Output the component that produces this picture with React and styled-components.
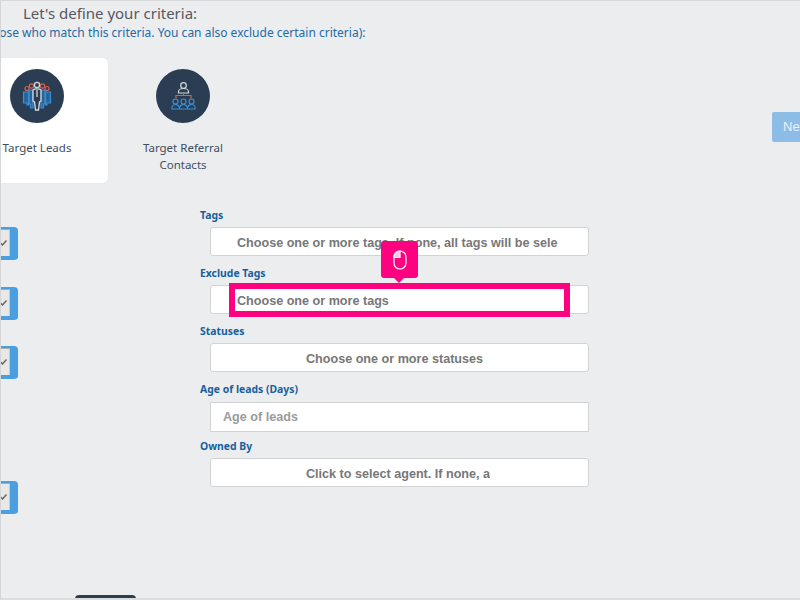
import React from 'react';
import styled, { createGlobalStyle } from 'styled-components';

const GlobalStyle = createGlobalStyle`
  html, body {
    margin: 0;
    padding: 0;
    background: #ecedef;
  }
`;

const fields = [
  { label: 'Tags', text: 'Choose one or more tags. If none, all tags will be selected', inset: 26, width: 321 },
  { label: 'Exclude Tags', text: 'Choose one or more tags', inset: 26, width: 321 },
  { label: 'Statuses', text: 'Choose one or more statuses', inset: 95, width: 230 },
  { label: 'Age of leads (Days)', text: 'Age of leads', inset: 12, width: 321, square: true },
  { label: 'Owned By', text: 'Click to select agent. If none, all agents', inset: 95, width: 184 },
];

const toggleGaps = [0, 27, 26, 102];

const LeadsIcon = () => (
  <svg width="54" height="54" viewBox="0 0 54 54" fill="none">
    <g stroke="#d9604c" strokeWidth="1.2">
      <circle cx="17" cy="19.5" r="2" />
      <circle cx="21.5" cy="17" r="2.2" />
      <circle cx="32.5" cy="17" r="2.2" />
      <circle cx="37" cy="19.5" r="2" />
    </g>
    <g stroke="#3a8fd6" strokeWidth="1.2" fill="#2a6496">
      <path d="M13.500 23h5v13h-1.500v-2h-3.500z" />
      <path d="M19 21h4v18h-2.500v-4h-1.500z" />
      <path d="M40.500 23h-5v13h1.500v-2h3.500z" />
      <path d="M35 21h-4v18h2.500v-4h1.500z" />
    </g>
    <g stroke="#d5d9dd" strokeWidth="1.3" fill="#2b3d52">
      <circle cx="27" cy="16" r="2.600" />
      <path d="M23 21c1-1.500 7-1.500 8 0v11l-1.500 1-1 8h-3l-1-8-1.500-1z" />
      <path d="M27 21v7" />
    </g>
  </svg>
);

const ReferralIcon = () => (
  <svg width="54" height="54" viewBox="0 0 54 54" fill="none">
    <g stroke="#d5d9dd" strokeWidth="1.200">
      <circle cx="27.500" cy="16.500" r="2.800" />
      <path d="M22.500 24v-1.500c0-1.500 2-3 5-3s5 1.500 5 3V24z" />
    </g>
    <path d="M27.500 24v3M20 29.500v-3h15v3" stroke="#d9604c" strokeWidth="1.200" />
    <g stroke="#3a8fd6" strokeWidth="1.200">
      <circle cx="19.500" cy="32.500" r="2.500" />
      <circle cx="27.500" cy="32.500" r="2.500" />
      <circle cx="35.500" cy="32.500" r="2.500" />
      <path d="M16 40v-1.500c0-1.500 1.500-3 3.500-3s3.500 1.500 4 3c.5-1.500 2-3 4-3s3.500 1.500 4 3c.5-1.500 2-3 4-3s3.500 1.500 3.500 3V40z" />
    </g>
  </svg>
);

const MouseIcon = () => (
  <svg width="14" height="20" viewBox="0 0 14 20" fill="none" stroke="#fff" strokeWidth="1.200">
    <rect x="1" y="1" width="12" height="18" rx="6" />
    <path d="M7 1v6.500H1V7a6 6 0 0 1 6-6z" fill="#ffc4e1" />
  </svg>
);

const App = () => (
  <Page>
    <GlobalStyle />
    <Heading>Let's define your criteria:</Heading>
    <Subtitle>Select those who match this criteria. You can also exclude certain criteria):</Subtitle>
    <CardRow>
      <Card $active>
        <IconCircle><LeadsIcon /></IconCircle>
        <CardLabel>Target Leads</CardLabel>
      </Card>
      <Card>
        <IconCircle><ReferralIcon /></IconCircle>
        <CardLabel>Target Referral Contacts</CardLabel>
      </Card>
      <NextButton>Next</NextButton>
    </CardRow>
    <Columns>
      <ToggleColumn>
        {toggleGaps.map((gap, i) => (
          <Toggle key={i} $gap={gap}>
            <ToggleFace>
              <svg width="7" height="6" viewBox="0 0 7 6" fill="none" stroke="#666" strokeWidth="1.500">
                <path d="M0.500 3l2 2 4-4.500" />
              </svg>
            </ToggleFace>
          </Toggle>
        ))}
      </ToggleColumn>
      <Form>
        {fields.map((f) => (
          <Field key={f.label} $short={f.label === 'Age of leads (Days)'}>
            <FieldLabel>{f.label}</FieldLabel>
            <FieldBox $square={f.square}>
              <Placeholder $inset={f.inset} $width={f.width} $square={f.square}>{f.text}</Placeholder>
            </FieldBox>
          </Field>
        ))}
        <Highlight />
        <Hint>
          <MouseIcon />
        </Hint>
      </Form>
    </Columns>
    <BottomTab />
  </Page>
);

const Page = styled.div`
  position: relative;
  box-sizing: border-box;
  width: 800px;
  height: 600px;
  overflow: hidden;
  background: #ecedef;
  border-top: 1px solid #d8d9db;
  border-left: 1px solid #d4d5d7;
  border-bottom: 2px solid #dcdddf;
  font-family: "Noto Sans", "Liberation Sans", sans-serif;
`;

const Heading = styled.h1`
  margin: 2px 0 0 22px;
  font-size: 15px;
  line-height: 20px;
  font-weight: 400;
  color: #55595f;
`;

const Subtitle = styled.p`
  margin: 1px 0 0 -50px;
  font-size: 12px;
  line-height: 17px;
  color: #1f6aa5;
  white-space: nowrap;
`;

const CardRow = styled.div`
  display: flex;
  align-items: flex-start;
  gap: 4px;
  margin: 17px 0 0 -35px;
`;

const Card = styled.div`
  flex: none;
  box-sizing: border-box;
  width: 142px;
  height: 125px;
  padding: 11px 8px 0;
  border-radius: 5px;
  text-align: center;
  background: ${(props) => (props.$active ? '#fff' : 'transparent')};
  box-shadow: ${(props) => (props.$active ? '0 0 1px #cfd1d4' : 'none')};
`;

const IconCircle = styled.div`
  width: 54px;
  height: 54px;
  margin: 0 auto;
  border-radius: 50%;
  background: #2b3d52;
`;

const CardLabel = styled.div`
  margin-top: 16px;
  font-size: 11.500px;
  line-height: 17px;
  color: #3e4d5f;
`;

const NextButton = styled.div`
  flex: none;
  box-sizing: border-box;
  width: 60px;
  height: 30px;
  margin: 54px 0 0 514px;
  padding-left: 11px;
  border-radius: 2px;
  background: #8dbde6;
  color: #eaf4fc;
  font-family: "Liberation Sans", sans-serif;
  font-size: 13px;
  line-height: 30px;
`;

const Columns = styled.div`
  display: flex;
  margin-top: 23px;
`;

const ToggleColumn = styled.div`
  flex: none;
  width: 199px;
  padding-top: 21px;
`;

const Toggle = styled.div`
  box-sizing: border-box;
  width: 17px;
  height: 33px;
  margin-top: ${(props) => props.$gap}px;
  border: solid #4a9fe0;
  border-width: 2px 8px 4px 0;
  border-radius: 0 4px 4px 0;
  background: #4a9fe0;
`;

const ToggleFace = styled.div`
  display: flex;
  align-items: center;
  box-sizing: border-box;
  height: 100%;
  margin-left: -1px;
  background: #e8e8e6;
  border-top: 1px solid #a9a9a9;
  border-right: 1px solid #c9c9c9;
`;

const Form = styled.div`
  position: relative;
  display: flex;
  flex-direction: column;
  flex: none;
  width: 390px;
`;

const Field = styled.div`
  height: ${(props) => (props.$short ? 57 : 58)}px;
`;

const FieldLabel = styled.div`
  height: 21px;
  padding-top: 1px;
  box-sizing: border-box;
  font-size: 10.400px;
  line-height: 16px;
  font-weight: 700;
  color: #16609e;
  white-space: nowrap;
`;

const FieldBox = styled.div`
  box-sizing: border-box;
  width: 379px;
  height: ${(props) => (props.$square ? 30 : 29)}px;
  margin: ${(props) => (props.$square ? 1 : 0)}px 0 0 10px;
  border: 1px solid #d2d3d5;
  border-radius: ${(props) => (props.$square ? 0 : '3px')};
  background: #fff;
`;

const Placeholder = styled.div`
  width: ${(props) => props.$width}px;
  margin-left: ${(props) => props.$inset}px;
  overflow: hidden;
  white-space: nowrap;
  font-family: "Liberation Sans", sans-serif;
  font-size: 12.600px;
  font-weight: 700;
  line-height: 27px;
  padding-top: ${(props) => (props.$square ? 1 : 2)}px;
  color: ${(props) => (props.$square ? '#9b9b9b' : '#777')};
`;

const Highlight = styled.div`
  position: absolute;
  top: 77px;
  left: 29px;
  box-sizing: border-box;
  width: 341px;
  height: 34px;
  border: 6px solid #ff0080;
`;

const Hint = styled.div`
  position: absolute;
  top: 35px;
  left: 181px;
  display: flex;
  align-items: center;
  justify-content: center;
  width: 37px;
  height: 37px;
  border-radius: 3px;
  background: #ff0080;

  &::after {
    content: '';
    position: absolute;
    left: 13px;
    bottom: -5px;
    border-left: 5px solid transparent;
    border-right: 5px solid transparent;
    border-top: 5px solid #ff0080;
  }
`;

const BottomTab = styled.div`
  position: absolute;
  left: 74px;
  bottom: -2px;
  width: 61px;
  height: 5px;
  border-radius: 4px 4px 0 0;
  background: #2c3e50;
`;

export default App;
